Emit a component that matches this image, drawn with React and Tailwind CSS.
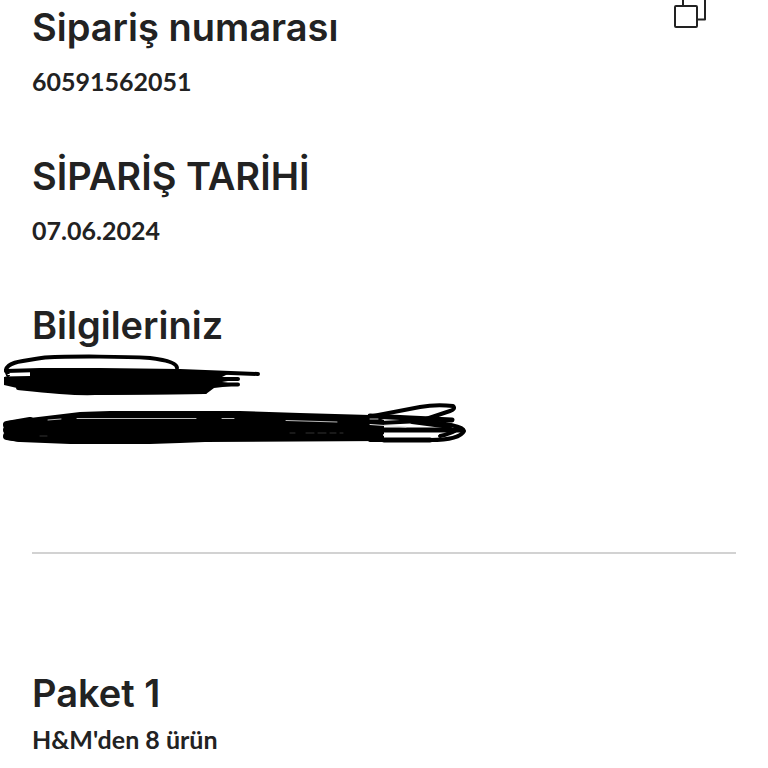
const CopyIcon = () => (
  <svg width="32" height="30" viewBox="0 0 32 30" fill="none" stroke="#222" strokeWidth="2" strokeLinejoin="round" aria-hidden="true">
    <rect x="1" y="6" width="22" height="21" rx="1" />
    <path d="M9 6V-3H31V19.5H23" />
  </svg>
);

// Hand drawn strokes that hide the customer's details
const Scribble = () => (
  <svg width="480" height="99" viewBox="0 349 480 99" fill="none" stroke="#000" strokeWidth="4" strokeLinecap="round" strokeLinejoin="round" aria-hidden="true">
    <path d="M6 370C7 362 22 361 45 357.5C75 356 125 356.5 150 358C166 360 177 363 177 368" />
    <path d="M6 371L40 370L100 370L180 371L258 374" />
    <path d="M6 370L8 375" />
    <path fill="#000" stroke="none" d="M30 369L175 370L230 373L222 377L240 379L222 382L240 385L214 388L206 394L90 395L40 391L17 388L4 385L4 377L30 376Z" />
    <path d="M6 378.5H100M6 383H100M190 379H238M190 384.5H238" />
    <path d="M18 388C45 391 70 394 95 393L205 392" />

    <path fill="#000" stroke="none" d="M8 421L30 418L80 412L110 411L240 411L300 413L370 415L384 420L384 441L205 442L180 443L150 444L70 444L20 442L8 440Z" />
    <path d="M7 425L30 421M7 430H40M7 436L20 438" strokeWidth="8" />
    <path d="M373 416L420 407Q436 404 453 406Q456 409 450 411L426 419" />
    <path d="M370 416L410 418L452 420" strokeWidth="5" />
    <path d="M380 423L420 421C448 424 463 426 464 431C461 437 448 440 430 440L370 440" />
    <path d="M380 430L412 430L460 430" strokeWidth="5" />
    <path d="M440 436C446 435 450 433 455 431M412 422L450 427" strokeWidth="4" />
    <path d="M384 440H430" strokeWidth="5" />
    <g stroke="#bbb" strokeWidth="1">
      <path d="M48 420L61 419M77 418.5H196M222 418.5H234M286 420.5L337 422M370 419H378" />
      <path d="M40 436H47M290 433H295M306 433H314M318 433H326M330 433H336M340 433H343" stroke="#333" />
    </g>
    <path d="M370 424.5L406 427" stroke="#ddd" strokeWidth="1" />
    <path d="M8 374.5H28" stroke="#fff" strokeWidth="1" />
    <path d="M384 435H424L438 434" stroke="#fff" strokeWidth="2" />
  </svg>
);

const Heading = ({ children }) => (
  <h2 className="text-[38px] leading-[48px] font-semibold font-['Inter','Open_Sans',sans-serif]">{children}</h2>
);

const Detail = ({ children }) => (
  <p className="text-[25px] leading-8 font-bold">{children}</p>
);

const App = () => {
  return (
    <main className="min-h-screen bg-white px-8 pt-[3px] text-[#222] font-['Lato','Open_Sans',sans-serif]">
      {/* Order details */}
      <div className="flex flex-col gap-[55px]">
        <section className="flex items-start justify-between">
          <div className="flex flex-col gap-[14px]">
            <Heading>Sipariş numarası</Heading>
            <Detail>60591562051</Detail>
          </div>
          <button type="button" aria-label="Kopyala" className="-mt-[3px] mr-[30px]">
            <CopyIcon />
          </button>
        </section>

        <section className="flex flex-col gap-[14px]">
          <Heading>SİPARİŞ TARİHİ</Heading>
          <Detail>07.06.2024</Detail>
        </section>

        <section>
          <Heading>Bilgileriniz</Heading>
          <div className="-ml-8">
            <Scribble />
          </div>
        </section>
      </div>

      <hr className="mt-[104px] border-t-2 border-[#d2d2d2]" />

      {/* Package */}
      <section className="mt-[115px] flex flex-col gap-[6px]">
        <Heading>Paket 1</Heading>
        <Detail>H&amp;M'den 8 ürün</Detail>
      </section>
    </main>
  );
};

export default App;
